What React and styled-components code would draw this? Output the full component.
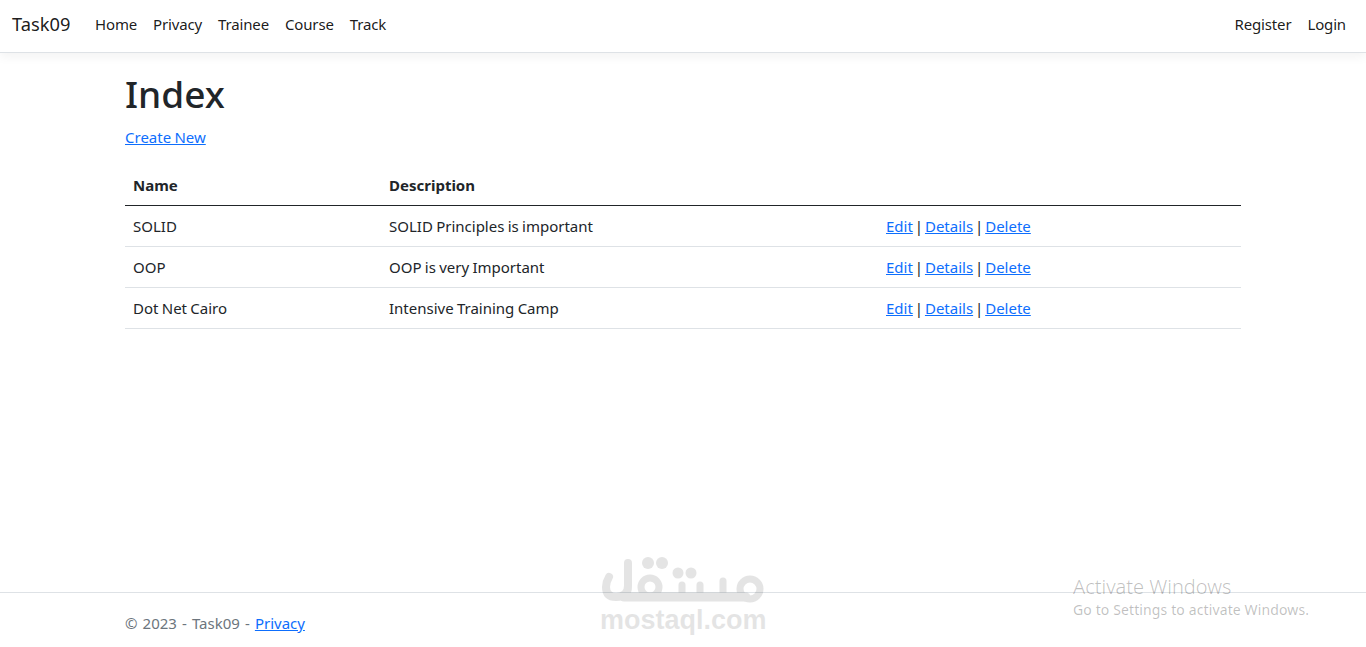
import React from "react";
import styled, { createGlobalStyle } from "styled-components";

const GlobalStyle = createGlobalStyle`
  html, body {
    margin: 0;
    height: 100%;
    overflow: hidden;
  }
  body {
    font-family: "Noto Sans", "Open Sans", sans-serif;
    font-size: 15px;
    line-height: 24px;
    word-spacing: -0.6px;
    color: #212529;
    background: #fff;
  }
  #root {
    height: 100%;
  }
  * {
    box-sizing: border-box;
  }
`;

const courses = [
  { name: "SOLID", description: "SOLID Principles is important" },
  { name: "OOP", description: "OOP is very Important" },
  { name: "Dot Net Cairo", description: "Intensive Training Camp" },
];

const Page = styled.div`
  height: 647px;
  display: flex;
  flex-direction: column;
  overflow: hidden;
  position: relative;
`;

const Navbar = styled.nav`
  flex: none;
  height: 53px;
  padding: 0 12px 4px;
  display: flex;
  align-items: center;
  background: #fff;
  border-bottom: 1px solid #dee2e6;
  box-shadow: 0 4px 10px rgba(0, 0, 0, 0.05);
  margin-bottom: 16px;
`;

const Brand = styled.a`
  font-size: 18.3px;
  color: rgba(0, 0, 0, 0.9);
  margin-right: 16px;
  width: 59px;
`;

const NavLinks = styled.div`
  display: flex;
  flex: ${(props) => (props.grow ? 1 : "none")};
`;

const NavLink = styled.a`
  padding: 8px;
  letter-spacing: -0.15px;
  color: rgba(0, 0, 0, 0.9);
`;

const Main = styled.main`
  flex: 1;
  width: 1140px;
  margin: 0 auto;
  padding: 0 12px;
`;

const Heading = styled.h1`
  margin: 0 0 6px;
  font-size: 37px;
  font-weight: 500;
  line-height: 50px;
`;

const Paragraph = styled.p`
  margin: 0 0 16px;
`;

const Link = styled.a`
  color: #0d6efd;
  text-decoration: underline;
`;

const Table = styled.table`
  width: 100%;
  table-layout: fixed;
  border-collapse: collapse;
`;

const HeadCell = styled.th`
  padding: 8px;
  text-align: left;
  font-weight: 700;
  border-bottom: 1px solid #212529;
  width: ${(props) => props.width};
`;

const Cell = styled.td`
  padding: 8px;
  border-bottom: 1px solid #dee2e6;
`;

const ActionCell = styled(Cell)`
  word-spacing: -2px;
`;

const Footer = styled.footer`
  flex: none;
  height: 55px;
  line-height: 60px;
  word-spacing: 1.2px;
  border-top: 1px solid #dee2e6;
  color: #6c757d;
`;

const FooterInner = styled.div`
  width: 1140px;
  margin: 0 auto;
  padding: 0 12px;
`;

const Watermark = styled.div`
  position: absolute;
  left: 600px;
  top: 556px;
  width: 166px;
  text-align: center;
  opacity: 0.1;
  pointer-events: none;
`;

const WatermarkText = styled.div`
  font-family: "Liberation Sans", sans-serif;
  font-size: 27px;
  line-height: 28px;
  font-weight: 700;
  word-spacing: 0;
  color: #000;
  margin-top: -6px;
`;

const Activation = styled.div`
  position: absolute;
  left: 1073px;
  top: 575px;
  word-spacing: 0;
  color: rgba(0, 0, 0, 0.25);
  pointer-events: none;
`;

const ActivationTitle = styled.div`
  font-size: 20px;
  line-height: 24px;
  font-weight: 300;
`;

const ActivationText = styled.div`
  font-size: 14px;
  line-height: 22px;
  letter-spacing: 0.12px;
`;

const MostaqlLogo = () => (
  <svg width="166" height="50" viewBox="0 0 166 50" fill="none" stroke="#000" strokeWidth="8" strokeLinecap="round">
    <path d="M28 7V30Q28 41 16 41Q6 41 6 31Q6 26 9 21" />
    <path d="M24 41H146" strokeWidth="9" />
    <circle cx="50" cy="31" r="9" strokeWidth="7" />
    <path d="M82 29V41M100 29V41M123 25V41" strokeWidth="7" />
    <circle cx="150" cy="33" r="10" strokeWidth="7" />
    <g fill="#000" stroke="none">
      <circle cx="48" cy="7" r="6" />
      <circle cx="62" cy="7" r="6" />
      <circle cx="78" cy="17" r="5.5" />
      <circle cx="91" cy="17" r="5.5" />
    </g>
  </svg>
);

export default function App() {
  return (
    <Page>
      <GlobalStyle />
      <Navbar>
        <Brand>Task09</Brand>
        <NavLinks grow>
          <NavLink>Home</NavLink>
          <NavLink>Privacy</NavLink>
          <NavLink>Trainee</NavLink>
          <NavLink>Course</NavLink>
          <NavLink>Track</NavLink>
        </NavLinks>
        <NavLinks>
          <NavLink>Register</NavLink>
          <NavLink>Login</NavLink>
        </NavLinks>
      </Navbar>
      <Main>
        <Heading>Index</Heading>
        <Paragraph>
          <Link href="#">Create New</Link>
        </Paragraph>
        <Table>
          <thead>
            <tr>
              <HeadCell width="256px">Name</HeadCell>
              <HeadCell width="497px">Description</HeadCell>
              <HeadCell />
            </tr>
          </thead>
          <tbody>
            {courses.map((course) => (
              <tr key={course.name}>
                <Cell>{course.name}</Cell>
                <Cell>{course.description}</Cell>
                <ActionCell>
                  <Link href="#">Edit</Link> | <Link href="#">Details</Link> | <Link href="#">Delete</Link>
                </ActionCell>
              </tr>
            ))}
          </tbody>
        </Table>
      </Main>
      <Footer>
        <FooterInner>
          © 2023 - Task09 - <Link href="#">Privacy</Link>
        </FooterInner>
      </Footer>
      <Watermark>
        <MostaqlLogo />
        <WatermarkText>mostaql.com</WatermarkText>
      </Watermark>
      <Activation>
        <ActivationTitle>Activate Windows</ActivationTitle>
        <ActivationText>Go to Settings to activate Windows.</ActivationText>
      </Activation>
    </Page>
  );
}
